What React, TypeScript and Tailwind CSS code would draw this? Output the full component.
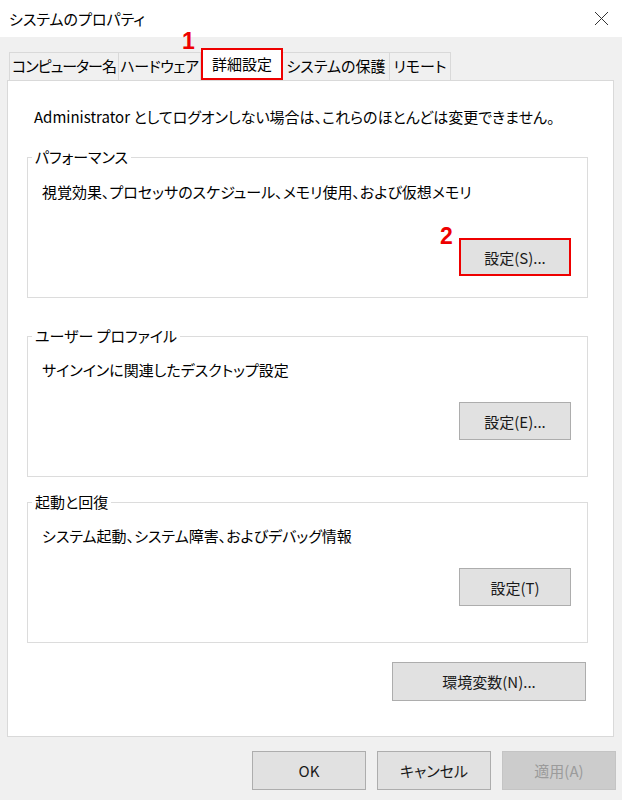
import type { ReactNode } from 'react'

const tabs = [
  { label: 'コンピューター名', w: 'w-[110px] border-l tracking-[-1px]' },
  { label: 'ハードウェア', w: 'w-[82px] tracking-[-0.4px]' },
  { label: '詳細設定', w: 'w-[82px]', active: true },
  { label: 'システムの保護', w: 'w-[107px]' },
  { label: 'リモート', w: 'w-[61px]' },
]

function Btn({
  children,
  className = '',
  disabled = false,
}: {
  children: ReactNode
  className?: string
  disabled?: boolean
}) {
  return (
    <button
      className={
        'flex items-center justify-center leading-none whitespace-nowrap ' +
        (disabled
          ? 'border border-[#c4c4c4] bg-[#cccccc] text-[#9b9b9b] '
          : 'border border-[#adadad] bg-[#e1e1e1] text-[#1a1a1a] ') +
        className
      }
    >
      {children}
    </button>
  )
}

function Group({
  title,
  desc,
  descGap,
  btnGap,
  btn,
  highlight = false,
}: {
  title: string
  desc: string
  descGap: string
  btnGap: string
  btn: string
  highlight?: boolean
}) {
  return (
    <fieldset className="ml-[19px] w-[561px] h-[151px] border border-[#dcdcdc]">
      <legend className="ml-[4px] px-[3px] leading-[20px]">{title}</legend>
      <div className={'pl-[14px] leading-[20px] ' + descGap}>{desc}</div>
      <div className={'flex justify-end pr-[16px] ' + btnGap}>
        <Btn
          className={
            'w-[112px] h-[38px] ' +
            (highlight ? 'border-2 border-[#ee0000]' : '')
          }
        >
          {btn}
        </Btn>
      </div>
    </fieldset>
  )
}

export default function App() {
  return (
    <div className="relative w-[622px] h-[800px] bg-[#f0f0f0] text-[15px] text-black font-['Noto_Sans_CJK_JP',sans-serif] [font-feature-settings:'palt']">
      {/* title bar */}
      <div className="h-[37px] bg-white flex items-center justify-between pl-[9px] pr-[13px]">
        <span className="leading-none">システムのプロパティ</span>
        <svg width="15" height="15" viewBox="0 0 15 15" className="text-[#333]">
          <path d="M1 1 L14 14 M14 1 L1 14" stroke="currentColor" strokeWidth="1" />
        </svg>
      </div>

      {/* tabs */}
      <div className="h-[43px] flex items-end pl-[9px]">
        {tabs.map(t =>
          t.active ? (
            <div
              key={t.label}
              className={t.w + ' h-[32px] bg-white border-2 border-[#ee0000] flex items-center justify-center whitespace-nowrap'}
            >
              {t.label}
            </div>
          ) : (
            <div
              key={t.label}
              className={t.w + ' h-[28px] border-t border-r border-[#d9d9d9] bg-[#f0f0f0] flex items-center justify-center whitespace-nowrap'}
            >
              {t.label}
            </div>
          )
        )}
      </div>

      {/* panel */}
      <div className="ml-[7px] w-[607px] h-[657px] border border-[#d9d9d9] bg-white pt-[26px]">
        <div className="pl-[26px] leading-[20px]">
          Administrator としてログオンしない場合は、これらのほとんどは変更できません。
        </div>
        <div className="mt-[20px]">
          <Group
            title="パフォーマンス"
            desc="視覚効果、プロセッサのスケジュール、メモリ使用、および仮想メモリ"
            descGap="mt-[15px]"
            btnGap="mt-[36px]"
            btn="設定(S)..."
            highlight
          />
        </div>
        <div className="mt-[28px]">
          <Group
            title="ユーザー プロファイル"
            desc="サインインに関連したデスクトップ設定"
            descGap="mt-[14px]"
            btnGap="mt-[22px]"
            btn="設定(E)..."
          />
        </div>
        <div className="mt-[15px]">
          <Group
            title="起動と回復"
            desc="システム起動、システム障害、およびデバッグ情報"
            descGap="mt-[14px]"
            btnGap="mt-[22px]"
            btn="設定(T)"
          />
        </div>
        <div className="mt-[19px] flex justify-end pr-[27px]">
          <Btn className="w-[194px] h-[39px]">環境変数(N)...</Btn>
        </div>
      </div>

      {/* dialog buttons */}
      <div className="mt-[14px] flex justify-end gap-[11px] pr-[6px]">
        <Btn className="w-[114px] h-[39px]">OK</Btn>
        <Btn className="w-[114px] h-[39px]">キャンセル</Btn>
        <Btn className="w-[114px] h-[39px]" disabled>
          適用(A)
        </Btn>
      </div>

      {/* step annotations */}
      <span className="absolute left-[182px] top-[30px] font-['Liberation_Sans',sans-serif] font-bold text-[23px] leading-none text-[#ee0000]">
        1
      </span>
      <span className="absolute left-[440px] top-[225px] font-['Liberation_Sans',sans-serif] font-bold text-[23px] leading-none text-[#ee0000]">
        2
      </span>
    </div>
  )
}
